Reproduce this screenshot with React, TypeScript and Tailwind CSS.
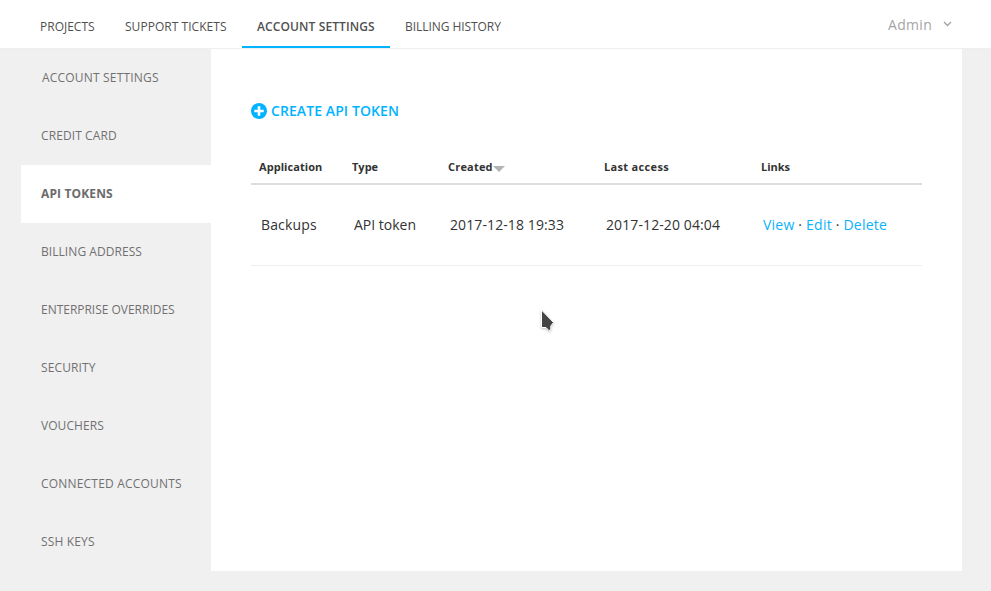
import React from "react";

const tabs = [
  { label: "PROJECTS", cls: "w-[85px]" },
  { label: "SUPPORT TICKETS", cls: "w-[132px] tracking-[0.04px]" },
  { label: "ACCOUNT SETTINGS", cls: "w-[148px] font-semibold tracking-[0.11px] border-b-2 border-[#00b3ff]" },
  { label: "BILLING HISTORY", cls: "w-[126px] tracking-[-0.06px]" },
];

const menu = [
  { label: "ACCOUNT SETTINGS", cls: "pl-[21px] tracking-[0.19px] text-[#707070]" },
  { label: "CREDIT CARD", cls: "pl-5 tracking-[0.1px] text-[#707070]" },
  { label: "API TOKENS", cls: "pl-5 tracking-[0.14px] bg-white font-bold text-[#6b6b6b]" },
  { label: "BILLING ADDRESS", cls: "pl-5 tracking-[0.06px] text-[#707070]" },
  { label: "ENTERPRISE OVERRIDES", cls: "pl-5 tracking-[-0.02px] text-[#707070]" },
  { label: "SECURITY", cls: "pl-5 tracking-[0.12px] text-[#707070]" },
  { label: "VOUCHERS", cls: "pl-5 tracking-[0.06px] text-[#707070]" },
  { label: "CONNECTED ACCOUNTS", cls: "pl-5 tracking-[0.19px] text-[#707070]" },
  { label: "SSH KEYS", cls: "pl-5 tracking-[0.16px] text-[#707070]" },
];

const link = "text-[#0cb2fc]";

export default function App() {
  return (
    <div className="relative h-[591px] w-[991px] overflow-hidden bg-[#f0f0f0] font-['Open_Sans',sans-serif] text-[#333]">
      <header className="flex h-[49px] justify-between border-b border-[#eee] bg-white">
        <nav className="flex pl-[25px] text-[#505050]">
          {tabs.map((t) => (
            <a key={t.label} className={`h-[48px] pt-[18px] pl-[15px] text-[12px] leading-[18px] whitespace-nowrap ${t.cls}`}>
              {t.label}
            </a>
          ))}
        </nav>
        <div className="flex h-[48px] items-center gap-[11px] pr-[39px] text-[14px] text-[#a5a5a5]">
          <span className="tracking-[0.28px]">Admin</span>
          <svg width="9" height="6" viewBox="0 0 9 6" fill="none" stroke="#a0a0a0" strokeWidth="1.3">
            <path d="M1 1l3.5 3.5L8 1" />
          </svg>
        </div>
      </header>
      <div className="flex">
        <aside className="w-[211px] pl-[21px]">
          <ul>
            {menu.map((m) => (
              <li key={m.label} className={`flex h-[58px] items-center text-[12px] whitespace-nowrap ${m.cls}`}>
                {m.label}
              </li>
            ))}
          </ul>
        </aside>
        <main className="h-[522px] w-[751px] bg-white px-[40px] pt-[52px]">
          <a className="flex h-[20px] items-center gap-[4px] text-[14px] font-semibold tracking-[0.08px] text-[#00b3ff]">
            <svg width="16" height="16" viewBox="0 0 16 16">
              <circle cx="8" cy="8" r="8" fill="#00b3ff" />
              <path d="M8 3.3v9.4M3.3 8h9.4" stroke="#fff" strokeWidth="2.6" />
            </svg>
            <span className="pb-[2px]">CREATE API TOKEN</span>
          </a>
          <div className="mt-[29px] w-[671px]">
            <div className="grid h-[35px] grid-cols-[93px_96px_156px_157px_1fr] items-center border-b-2 border-[#ddd] pt-[2px] pl-[8px] text-[11px] font-bold">
              <span className="tracking-[0.06px]">Application</span>
              <span>Type</span>
              <span className="flex items-center tracking-[0.2px]">
                Created
                <svg className="mt-[3px]" width="12" height="6" viewBox="0 0 12 6">
                  <path d="M0 0h12L6 6z" fill="#b3b3b3" />
                </svg>
              </span>
              <span className="tracking-[0.33px]">Last access</span>
              <span>Links</span>
            </div>
            <div className="grid h-[81px] grid-cols-[93px_96px_156px_157px_1fr] items-center border-b border-[#eee] pb-[2px] pl-[10px] text-[14px]">
              <span className="tracking-[0.14px]">Backups</span>
              <span>API token</span>
              <span className="tracking-[0.1px]">2017-12-18 19:33</span>
              <span className="tracking-[0.1px]">2017-12-20 04:04</span>
              <span className="whitespace-nowrap tracking-[0.22px]">
                <a className={link}>View</a> · <a className={link}>Edit</a> · <a className={link}>Delete</a>
              </span>
            </div>
          </div>
        </main>
      </div>
      <svg className="absolute top-[306px] left-[538px] drop-shadow-[0_1px_1px_rgba(0,0,0,0.25)]" width="20" height="28" viewBox="0 0 20 28">
        <path d="M3.5 4v17.5h4.5l3 3.2 1.8-1.2v-3.5l2.7-3.5z" fill="#444" stroke="#fff" strokeWidth="1" />
      </svg>
    </div>
  );
}
